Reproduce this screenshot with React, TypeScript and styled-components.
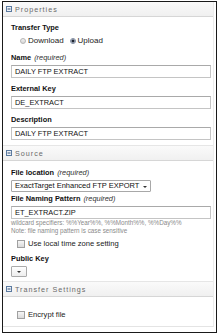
import React from 'react';
import styled, { createGlobalStyle } from 'styled-components';

const GlobalStyle = createGlobalStyle`
  html, body {
    margin: 0;
    padding: 0;
    background: #fff;
  }
  body {
    font-family: "Liberation Sans", Arial, sans-serif;
    color: #111;
  }
`;

const Frame = styled.div`
  margin: 1px 2px 0 2px;
  width: 213px;
  height: 330px;
  border: 1px solid #1a1a1a;
  box-sizing: content-box;
  overflow: hidden;
`;

const Panel = styled.div`
  width: 210px;
  height: 324px;
  border-right: 1px solid #ececec;
  border-bottom: 1px solid #e4e4e4;
`;

const SectionHeader = styled.div<{ $first?: boolean }>`
  display: flex;
  align-items: center;
  gap: 3px;
  height: 14px;
  padding-left: 3px;
  background: linear-gradient(#fafafa, #f0f0f0);
  border-top: ${(p) => (p.$first ? 'none' : '1px solid #e6e6e6')};
  border-bottom: 1px solid #d6d6d6;
  font-size: 7.2px;
  letter-spacing: 1px;
  color: #6a6a6a;
`;

const Body = styled.div<{ $pt: number; $pb: number }>`
  padding: ${(p) => p.$pt}px 0 ${(p) => p.$pb}px 8px;
`;

const Label = styled.div<{ $mt?: number }>`
  margin-top: ${(p) => p.$mt ?? 0}px;
  font-size: 7.4px;
  font-weight: bold;
  line-height: 10px;
  color: #111;
`;

const Req = styled.span`
  font-weight: normal;
  font-style: italic;
  color: #333;
  margin-left: 3px;
`;

const Field = styled.div<{ $mb?: number }>`
  margin-bottom: ${(p) => p.$mb ?? 6}px;
`;

const TextBox = styled.div`
  margin-top: 2px;
  width: 195px;
  height: 11px;
  border: 1px solid #c4c4c4;
  border-top-color: #a9a9a9;
  padding-left: 3px;
  font-size: 7.4px;
  line-height: 11px;
  color: #111;
  box-sizing: content-box;
`;

const SelectBox = styled.div`
  margin-top: 2px;
  display: flex;
  width: fit-content;
  align-items: center;
  gap: 4px;
  height: 10px;
  border: 1px solid #a8a8a8;
  padding: 0 3px;
  font-size: 7.5px;
  line-height: 10px;
  border-radius: 1px;
  background: #fff;
`;

const Caret = styled.span`
  width: 0;
  height: 0;
  border-left: 2px solid transparent;
  border-right: 2px solid transparent;
  border-top: 2.5px solid #333;
  margin-top: 1px;
`;

const MiniSelect = styled.div`
  margin-top: 2px;
  width: 14px;
  height: 9px;
  border: 1px solid #aaa;
  border-radius: 1px;
  display: flex;
  align-items: center;
  justify-content: center;
  background: linear-gradient(#fff, #eee);
`;

const RadioRow = styled.div`
  display: flex;
  align-items: center;
  gap: 2px;
  padding-left: 9px;
  margin: 3px 0 7px;
  font-size: 8px;
  line-height: 10px;
`;

const RadioDot = styled.span<{ $on?: boolean }>`
  width: 4px;
  height: 4px;
  border-radius: 50%;
  border: 1px solid ${(p) => (p.$on ? '#7d8aa0' : '#b5b5b5')};
  background: ${(p) =>
    p.$on ? 'radial-gradient(circle, #1c2330 0 1.3px, #d8deea 1.8px)' : 'linear-gradient(#f2f2f2, #d6d6d6)'};
  display: inline-block;
`;

const RadioLabel = styled.span`
  margin-right: 4px;
  color: #222;
`;

const Hint = styled.div`
  font-size: 6.3px;
  color: #8a8a8a;
  line-height: 8px;
`;

const CheckRow = styled.div<{ $mt?: number }>`
  display: flex;
  align-items: center;
  gap: 3px;
  margin-top: ${(p) => p.$mt ?? 0}px;
  padding-left: 6px;
  font-size: 7.6px;
  line-height: 10px;
  color: #222;
`;

const CheckBox = styled.span`
  width: 6px;
  height: 6px;
  border: 1px solid #a0a0a0;
  background: linear-gradient(#f6f6f6, #dadada);
`;

const Toggle = () => (
  <svg width="6" height="6" viewBox="0 0 6 6">
    <rect x="0.5" y="0.5" width="5" height="5" fill="#eef2f7" stroke="#5b7aa0" />
    <line x1="1.5" y1="3" x2="4.5" y2="3" stroke="#34527a" />
  </svg>
);

export default function App() {
  return (
    <>
      <GlobalStyle />
      <Frame>
        <Panel>
          <SectionHeader $first>
            <Toggle />
            Properties
          </SectionHeader>
          <Body $pt={6} $pb={5}>
            <Label>Transfer Type</Label>
            <RadioRow>
              <RadioDot />
              <RadioLabel>Download</RadioLabel>
              <RadioDot $on />
              <RadioLabel>Upload</RadioLabel>
            </RadioRow>
            <Field>
              <Label>
                Name<Req>(required)</Req>
              </Label>
              <TextBox>DAILY FTP EXTRACT</TextBox>
            </Field>
            <Field>
              <Label>External Key</Label>
              <TextBox>DE_EXTRACT</TextBox>
            </Field>
            <Field $mb={0}>
              <Label>Description</Label>
              <TextBox>DAILY FTP EXTRACT</TextBox>
            </Field>
          </Body>
          <SectionHeader>
            <Toggle />
            Source
          </SectionHeader>
          <Body $pt={7} $pb={4}>
            <Field $mb={2}>
              <Label>
                File location<Req>(required)</Req>
              </Label>
              <SelectBox>
                ExactTarget Enhanced FTP EXPORT
                <Caret />
              </SelectBox>
            </Field>
            <Field $mb={0}>
              <Label>
                File Naming Pattern<Req>(required)</Req>
              </Label>
              <TextBox>ET_EXTRACT.ZIP</TextBox>
            </Field>
            <Hint>wildcard specifiers: %%Year%%, %%Month%%, %%Day%%</Hint>
            <Hint>Note: file naming pattern is case sensitive</Hint>
            <CheckRow $mt={4}>
              <CheckBox />
              Use local time zone setting
            </CheckRow>
            <Label $mt={5}>Public Key</Label>
            <MiniSelect>
              <Caret />
            </MiniSelect>
          </Body>
          <SectionHeader>
            <Toggle />
            Transfer Settings
          </SectionHeader>
          <Body $pt={13} $pb={0}>
            <CheckRow>
              <CheckBox />
              Encrypt file
            </CheckRow>
          </Body>
        </Panel>
      </Frame>
    </>
  );
}
